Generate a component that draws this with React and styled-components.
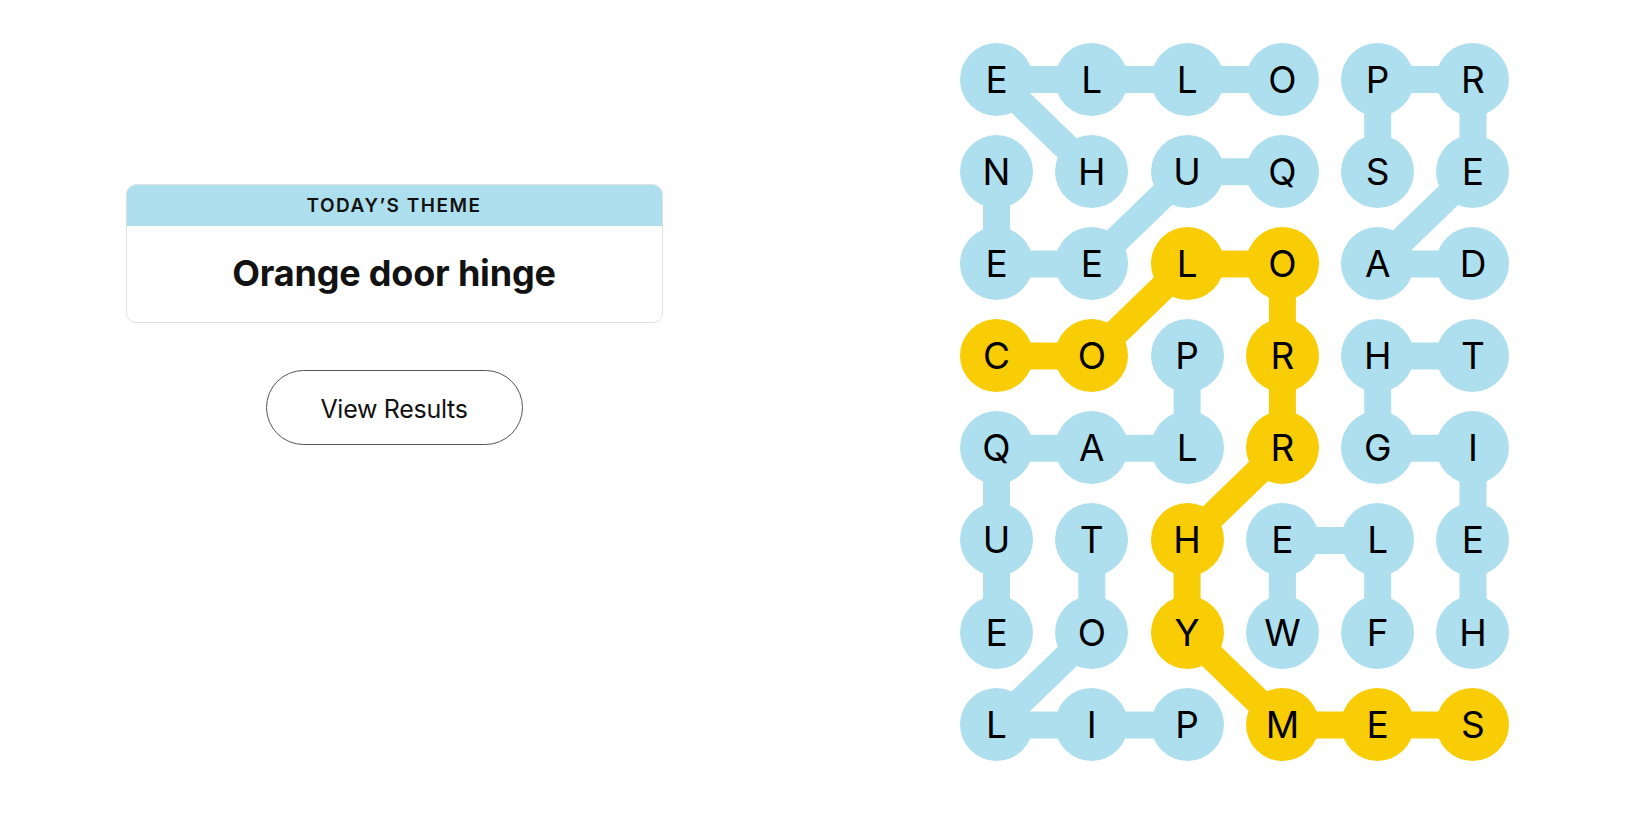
import React from "react";
import styled, { createGlobalStyle } from "styled-components";

const BLUE = "#aedfee";
const YELLOW = "#f8cd05";
const CELL = 73;
const COL_GAP = 22.3;
const ROW_GAP = 19.2;

const Global = createGlobalStyle`
  html, body { margin: 0; padding: 0; background: #ffffff; }
  body { font-family: Inter, "Noto Sans", Roboto, sans-serif; color: #121212; }
`;

const Page = styled.main`
  display: flex;
  align-items: flex-start;
  width: 1650px;
  height: 825px;
  overflow: hidden;
`;

const LeftPane = styled.section`
  width: 788px;
  padding-top: 184px;
  display: flex;
  flex-direction: column;
  align-items: center;
`;

const ThemeCard = styled.div`
  width: 537px;
  box-sizing: border-box;
  border: 1px solid #e0e0e0;
  border-radius: 10px;
  overflow: hidden;
  background: #fff;
`;

const ThemeHeader = styled.div`
  height: 41px;
  background: ${BLUE};
  display: flex;
  align-items: center;
  justify-content: center;
  font-size: 19px;
  font-weight: 600;
  letter-spacing: 1.5px;
  text-transform: uppercase;
  color: #121212;
`;

const ThemeBody = styled.div`
  height: 96px;
  display: flex;
  align-items: center;
  justify-content: center;
  font-size: 36px;
  font-weight: 700;
  letter-spacing: -0.2px;
  color: #121212;
  padding-bottom: 2px;
  box-sizing: border-box;
`;

const ResultsButton = styled.button`
  margin-top: 47px;
  width: 257px;
  height: 75px;
  border: 1.3px solid #555;
  border-radius: 40px;
  background: #fff;
  font-family: Inter, "Noto Sans", Roboto, sans-serif;
  font-size: 25px;
  font-weight: 400;
  color: #121212;
  letter-spacing: -0.3px;
  padding-top: 4px;
  cursor: pointer;
`;

const Board = styled.div`
  position: relative;
  margin-left: 172px;
  margin-top: 42.5px;
  display: grid;
  grid-template-columns: repeat(6, ${CELL}px);
  grid-auto-rows: ${CELL}px;
  column-gap: ${COL_GAP}px;
  row-gap: ${ROW_GAP}px;
`;

const Connectors = styled.svg`
  position: absolute;
  inset: 0;
  width: 100%;
  height: 100%;
  z-index: 0;
  overflow: visible;
`;

const Tile = styled.div`
  position: relative;
  z-index: 1;
  width: ${CELL}px;
  height: ${CELL}px;
  border-radius: 50%;
  background: ${(p) => (p.$spangram ? YELLOW : BLUE)};
  display: flex;
  align-items: center;
  justify-content: center;
  font-size: 37px;
  font-weight: 400;
  color: #000;
  line-height: 1;
`;

const rows = ["ELLOPR", "NHUQSE", "EELOAD", "COPRHT", "QALRGI", "UTHELE", "EOYWFH", "LIPMES"];

const words = [
  { color: BLUE, path: [[1, 1], [0, 0], [0, 1], [0, 2], [0, 3]] },
  { color: BLUE, path: [[1, 3], [1, 2], [2, 1], [2, 0], [1, 0]] },
  { color: BLUE, path: [[1, 4], [0, 4], [0, 5], [1, 5], [2, 4], [2, 5]] },
  { color: BLUE, path: [[6, 5], [5, 5], [4, 5], [4, 4], [3, 4], [3, 5]] },
  { color: BLUE, path: [[3, 2], [4, 2], [4, 1], [4, 0], [5, 0], [6, 0]] },
  { color: BLUE, path: [[7, 2], [7, 1], [7, 0], [6, 1], [5, 1]] },
  { color: BLUE, path: [[6, 4], [5, 4], [5, 3], [6, 3]] },
  {
    color: YELLOW,
    path: [[3, 0], [3, 1], [2, 2], [2, 3], [3, 3], [4, 3], [5, 2], [6, 2], [7, 3], [7, 4], [7, 5]],
  },
];

const spangram = new Set(words[7].path.map(([r, c]) => `${r},${c}`));

const cx = (c) => c * (CELL + COL_GAP) + CELL / 2;
const cy = (r) => r * (CELL + ROW_GAP) + CELL / 2;

export default function App() {
  return (
    <>
      <Global />
      <Page>
        <LeftPane>
          <ThemeCard>
            <ThemeHeader>Today’s Theme</ThemeHeader>
            <ThemeBody>Orange door hinge</ThemeBody>
          </ThemeCard>
          <ResultsButton>View Results</ResultsButton>
        </LeftPane>
        <Board>
          <Connectors>
            {words.map((w, i) => (
              <polyline
                key={i}
                points={w.path.map(([r, c]) => `${cx(c)},${cy(r)}`).join(" ")}
                fill="none"
                stroke={w.color}
                strokeWidth="27"
                strokeLinejoin="round"
                strokeLinecap="round"
              />
            ))}
          </Connectors>
          {rows.map((row, r) =>
            row.split("").map((ch, c) => (
              <Tile key={`${r}-${c}`} $spangram={spangram.has(`${r},${c}`)}>
                {ch}
              </Tile>
            ))
          )}
        </Board>
      </Page>
    </>
  );
}
